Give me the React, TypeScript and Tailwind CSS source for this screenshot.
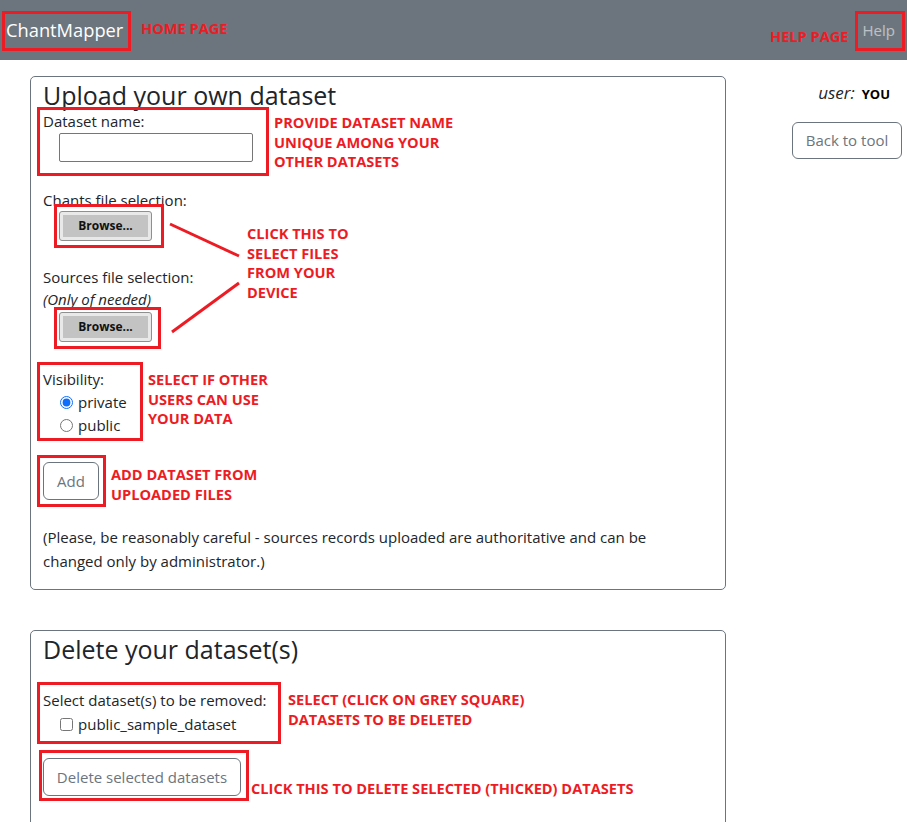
import React from 'react';

const RED = '#ed1c24';

const Box = ({ x, y, w, h }: { x: number; y: number; w: number; h: number }) => (
  <div
    className="absolute border-[3px] border-[#ed1c24] pointer-events-none"
    style={{ left: x, top: y, width: w, height: h }}
  />
);

const Note = ({ x, y, lines }: { x: number; y: number; lines: string[] }) => (
  <div
    className="absolute font-['Open_Sans',sans-serif] font-bold text-[14.6px] leading-[19.5px] text-[#ed1c24] whitespace-nowrap"
    style={{ left: x, top: y }}
  >
    {lines.map((l) => (
      <div key={l}>{l}</div>
    ))}
  </div>
);

const FileButton = () => (
  <div className="ml-[16px] w-[93px] h-[30px] rounded-[3px] border border-[#8f8f8f] bg-[#e9e9e9] p-[3px]">
    <div className="h-full bg-[#c3c3c3] flex items-center justify-center text-[12px] font-bold text-[#111]">
      Browse...
    </div>
  </div>
);

export default function App() {
  return (
    <div className="relative w-[907px] h-[822px] overflow-hidden bg-white font-['Open_Sans',sans-serif] text-[15px] text-[#212529]">
      {/* navbar */}
      <nav className="h-[60px] bg-[#6c757d] flex items-center justify-between pl-[6px] pr-[12px]">
        <span className="text-[18.3px] text-white">ChantMapper</span>
        <span className="text-[15px] text-white/55">Help</span>
      </nav>

      <div className="flex">
        <main className="ml-[30px] w-[696px]">
          {/* upload card */}
          <section className="mt-[16px] h-[514px] border border-[#6c757d] rounded-[5px] px-[12px]">
            <h3 className="text-[25px] leading-[30px] mt-[3px]">Upload your own dataset</h3>
            <div className="leading-[22px]">Dataset name:</div>
            <input
              type="text"
              className="block ml-[16px] mt-[1px] w-[194px] h-[29px] border border-[#767676] rounded-[2px]"
            />
            <div className="mt-[27px] leading-[22px]">Chants file selection:</div>
            <FileButton />
            <div className="mt-[25px] leading-[22px]">Sources file selection:</div>
            <div className="italic leading-[23px]">(Only of needed)</div>
            <div className="mt-[1px]"><FileButton /></div>
            <div className="mt-[26px] leading-[23px]">Visibility:</div>
            <label className="flex items-center gap-[5px] ml-[17px] leading-[23px]">
              <input type="radio" name="vis" defaultChecked className="m-0 w-[13px] h-[13px] accent-[#0d6efd]" />
              private
            </label>
            <label className="flex items-center gap-[5px] ml-[17px] leading-[23px]">
              <input type="radio" name="vis" className="m-0 w-[13px] h-[13px]" />
              public
            </label>
            <button className="mt-[25px] w-[56px] h-[38px] border border-[#6c757d] rounded-[6px] text-[#6c757d]">
              Add
            </button>
            <p className="mt-[25px] leading-[24px] w-[620px]">
              (Please, be reasonably careful - sources records uploaded are authoritative and can be changed only by
              administrator.)
            </p>
          </section>

          {/* delete card */}
          <section className="mt-[40px] h-[220px] border border-[#6c757d] rounded-[5px] px-[12px]">
            <h3 className="text-[25px] leading-[30px] mt-[3px]">Delete your dataset(s)</h3>
            <div className="mt-[25px] leading-[23px]">Select dataset(s) to be removed:</div>
            <label className="flex items-center gap-[5px] ml-[17px] mt-[1px] leading-[23px]">
              <input type="checkbox" className="m-0 w-[13px] h-[13px]" />
              public_sample_dataset
            </label>
            <button className="mt-[22px] w-[198px] h-[38px] border border-[#6c757d] rounded-[6px] text-[#6c757d]">
              Delete selected datasets
            </button>
          </section>
        </main>

        <aside className="flex-1 flex flex-col items-end pr-[5px]">
          <div className="mt-[20px] mr-[12px] flex items-baseline gap-[7px]">
            <span className="italic text-[17px]">user:</span>
            <span className="font-bold text-[13px] text-black">YOU</span>
          </div>
          <button className="mt-[16px] w-[110px] h-[37px] border border-[#6c757d] rounded-[6px] text-[#6c757d]">
            Back to tool
          </button>
        </aside>
      </div>

      {/* annotation layer */}
      <Box x={2} y={11} w={129} h={40} />
      <Box x={855} y={11} w={50} h={40} />
      <Box x={37} y={107} w={232} h={69} />
      <Box x={54} y={204} w={110} h={44} />
      <Box x={54} y={307} w={107} h={42} />
      <Box x={37} y={362} w={106} h={79} />
      <Box x={37} y={455} w={69} h={52} />
      <Box x={37} y={682} w={244} h={62} />
      <Box x={39} y={750} w={210} h={51} />

      <Note x={141} y={19} lines={['HOME PAGE']} />
      <Note x={770} y={27} lines={['HELP PAGE']} />
      <Note x={274} y={113} lines={['PROVIDE DATASET NAME', 'UNIQUE AMONG YOUR', 'OTHER DATASETS']} />
      <Note x={247} y={224} lines={['CLICK THIS TO', 'SELECT FILES', 'FROM YOUR', 'DEVICE']} />
      <Note x={148} y={370} lines={['SELECT IF OTHER', 'USERS CAN USE', 'YOUR DATA']} />
      <Note x={111} y={465} lines={['ADD DATASET FROM', 'UPLOADED FILES']} />
      <Note x={288} y={690} lines={['SELECT (CLICK ON GREY SQUARE)', 'DATASETS TO BE DELETED']} />
      <Note x={251} y={779} lines={['CLICK THIS TO DELETE SELECTED (THICKED) DATASETS']} />

      <svg className="absolute left-0 top-0 pointer-events-none" width="907" height="822">
        <line x1="170" y1="224" x2="239" y2="256" stroke={RED} strokeWidth="3" />
        <line x1="239" y1="283" x2="172" y2="332" stroke={RED} strokeWidth="3" />
      </svg>
    </div>
  );
}
